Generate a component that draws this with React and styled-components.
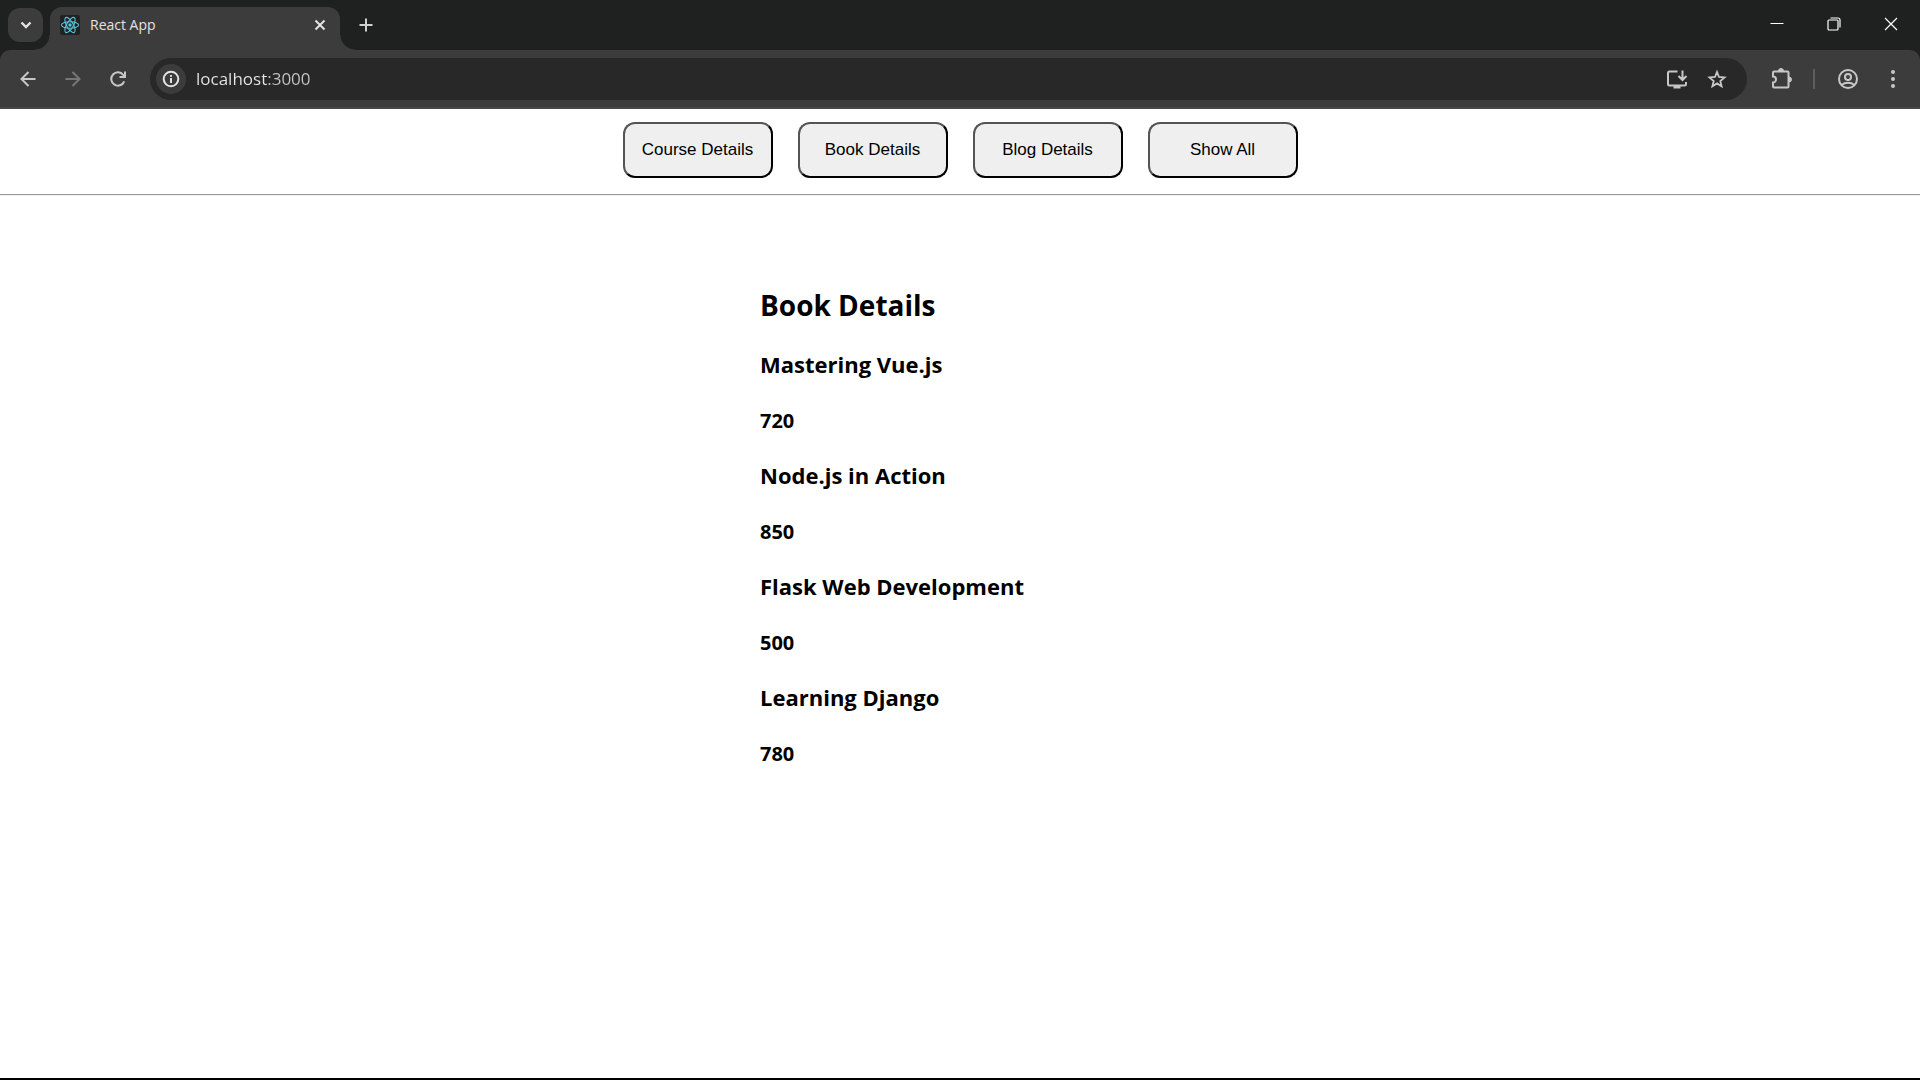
import React, { useState } from "react";
import styled, { createGlobalStyle } from "styled-components";

const GlobalStyle = createGlobalStyle`
  *, *::before, *::after { box-sizing: border-box; }
  html, body, #root { height: 100%; }
  body { margin: 0; background: #fff; color: #000; }
`;

const uiFont = '"Open Sans", "Noto Sans", sans-serif';
const chrome = "#3c3c3c";
const frame = "#1f2120";

const Window = styled.div`
  display: flex;
  flex-direction: column;
  min-height: 100%;
  border-bottom: 2px solid #000;
  font-family: ${uiFont};
`;

const TabStrip = styled.div`
  display: flex;
  align-items: flex-start;
  height: 50px;
  padding: 0 1px 0 8px;
  background: ${frame};
`;

const PlainButton = styled.button`
  display: flex;
  align-items: center;
  justify-content: center;
  padding: 0;
  border: 0;
  background: transparent;
  color: ${(p) => p.$color || "#c7c7c7"};
`;

const TabSearch = styled(PlainButton)`
  width: 35px;
  height: 34px;
  margin: 8px 7px 0 0;
  border-radius: 12px;
  background: ${chrome};
`;

const Tab = styled.div`
  position: relative;
  display: flex;
  align-items: center;
  width: 290px;
  height: 43px;
  margin-top: 7px;
  padding: 0 8px 8px 10px;
  border-radius: 12px 12px 0 0;
  background: ${chrome};

  &::before, &::after {
    content: "";
    position: absolute;
    bottom: 0;
    width: 15px;
    height: 15px;
  }
  &::before {
    right: 100%;
    background: radial-gradient(circle at 0 0, transparent 14px, ${chrome} 15px);
  }
  &::after {
    left: 100%;
    background: radial-gradient(circle at 100% 0, transparent 14px, ${chrome} 15px);
  }
`;

const TabTitle = styled.span`
  flex: 1;
  margin-left: 10px;
  font-size: 14px;
  line-height: 20px;
  color: #e3e3e3;
`;

const TabButton = styled(PlainButton)`
  width: 24px;
  height: 24px;
`;

const NewTab = styled(PlainButton)`
  width: 36px;
  height: 36px;
  margin: 7px 0 0 8px;
`;

const WindowControls = styled.div`
  display: flex;
  margin-left: auto;
`;

const WindowButton = styled(PlainButton)`
  width: 57px;
  height: 48px;
`;

const ToolbarFrame = styled.div`
  background: ${frame};
`;

const Toolbar = styled.div`
  display: flex;
  align-items: center;
  height: 59px;
  padding: 0 5px 2px;
  border-radius: 10px 10px 0 0;
  background: ${chrome};
  box-shadow: inset 0 -2px #484848;
`;

const ToolButton = styled(PlainButton)`
  width: 45px;
  height: 42px;
`;

const Omnibox = styled.form`
  flex: 1;
  display: flex;
  align-items: center;
  height: 42px;
  margin: 0 11px 0 10px;
  padding: 0 10px 0 6px;
  border-radius: 21px;
  background: #282828;
`;

const SiteInfo = styled(PlainButton)`
  width: 30px;
  height: 30px;
  border-radius: 50%;
  background: ${chrome};
`;

const Address = styled.input`
  flex: 1;
  min-width: 0;
  margin-left: 10px;
  padding: 0;
  border: 0;
  outline: 0;
  font-family: ${uiFont};
  font-size: 17px;
  line-height: 24px;
  color: transparent;
  background: linear-gradient(to right, #e8e8e8 72px, #c7c7c7 72px);
  background-clip: text;
`;

const OmniboxButton = styled(PlainButton)`
  width: 40px;
  height: 40px;
`;

const Divider = styled.span`
  width: 2px;
  height: 20px;
  margin: 0 10px;
  background: #5e5e5e;
`;

const Nav = styled.nav`
  display: flex;
  justify-content: center;
  gap: 25px;
  padding: 13px 0 16px;
`;

const NavButton = styled.button`
  width: 150px;
  height: 56px;
  padding: 0;
  border: 2px outset #000;
  border-radius: 12px;
  background: #efefef;
  color: #000;
  font-family: "Liberation Sans", Arial, sans-serif;
  font-size: 17px;
`;

const Rule = styled.hr`
  width: 100%;
  margin: 0;
  border: 0;
  border-top: 1px solid #9a9a9a;
  border-bottom: 1px solid #eeeeee;
`;

const Content = styled.main`
  width: 400px;
  margin: 89px auto 0;
`;

const Title = styled.h2`
  margin: 0 0 23px;
  font-size: 28px;
  line-height: 40px;
`;

const BookName = styled.h3`
  margin: 0;
  font-size: 22px;
  line-height: 32px;
`;

const BookPrice = styled.h4`
  margin: 28px 0 25px;
  font-size: 20px;
  line-height: 26px;
`;

const books = [
  { name: "Mastering Vue.js", price: 720 },
  { name: "Node.js in Action", price: 850 },
  { name: "Flask Web Development", price: 500 },
  { name: "Learning Django", price: 780 },
];

const Icon = ({ size = 24, width = 2, children }) => (
  <svg width={size} height={size} viewBox={`0 0 ${size} ${size}`} fill="none" stroke="currentColor" strokeWidth={width} aria-hidden="true">
    {children}
  </svg>
);

const ReactLogo = () => (
  <svg width="20" height="20" viewBox="0 0 20 20" fill="none" stroke="#58c4dc" aria-hidden="true">
    <rect width="20" height="20" rx="2" fill="#222" stroke="none" />
    {[0, 60, 120].map((angle) => (
      <ellipse key={angle} cx="10" cy="10" rx="8.6" ry="3.3" strokeWidth="1.1" transform={`rotate(${angle} 10 10)`} />
    ))}
    <circle cx="10" cy="10" r="1.7" fill="#58c4dc" stroke="none" />
  </svg>
);

export default function App() {
  const [address, setAddress] = useState("localhost:3000");
  return (
    <Window>
      <GlobalStyle />
      <TabStrip>
        <TabSearch aria-label="Search tabs" $color="#e3e3e3">
          <Icon size={16} width={2.4}><path d="M3.5 5.5 8 10l4.5-4.5" /></Icon>
        </TabSearch>
        <Tab>
          <ReactLogo />
          <TabTitle>React App</TabTitle>
          <TabButton aria-label="Close tab" $color="#e3e3e3">
            <Icon size={16}><path d="m3.5 3.5 9 9m0-9-9 9" /></Icon>
          </TabButton>
        </Tab>
        <NewTab aria-label="New tab" $color="#d0d0d0">
          <Icon size={18}><path d="M9 2.5v13M2.5 9h13" /></Icon>
        </NewTab>
        <WindowControls>
          <WindowButton aria-label="Minimize" $color="#fff">
            <Icon size={14} width={1}><path d="M.5 6.5h13" /></Icon>
          </WindowButton>
          <WindowButton aria-label="Restore" $color="#fff">
            <Icon size={14} width={1.2}>
              <rect x="1" y="3" width="10" height="10" rx="1" />
              <path d="M3.5 1H11a2 2 0 0 1 2 2v7.5" />
            </Icon>
          </WindowButton>
          <WindowButton aria-label="Close" $color="#fff">
            <Icon size={14} width={1.2}><path d="m1 1 12 12M13 1 1 13" /></Icon>
          </WindowButton>
        </WindowControls>
      </TabStrip>
      <ToolbarFrame>
        <Toolbar>
          <ToolButton aria-label="Back">
            <Icon><path d="M19.5 12H5.5M12.5 5l-7 7 7 7" /></Icon>
          </ToolButton>
          <ToolButton aria-label="Forward" $color="#777">
            <Icon><path d="M4.5 12h14M11.5 5l7 7-7 7" /></Icon>
          </ToolButton>
          <ToolButton aria-label="Reload">
            <Icon>
              <path d="M18.2 14.3A6.7 6.7 0 1 1 17.3 8l1.7 2" />
              <path d="M19 4.5V10h-5.5" />
            </Icon>
          </ToolButton>
          <Omnibox onSubmit={(e) => e.preventDefault()}>
            <SiteInfo type="button" aria-label="View site information" $color="#e3e3e3">
              <Icon size={20}>
                <circle cx="10" cy="10" r="7.3" />
                <path d="M10 9v5M10 6v1.8" />
              </Icon>
            </SiteInfo>
            <Address aria-label="Address" value={address} onChange={(e) => setAddress(e.target.value)} />
            <OmniboxButton type="button" aria-label="Install app">
              <Icon>
                <path d="M12.5 4.500H4.500a1.500 1.500 0 0 0-1.500 1.500v11a1.500 1.500 0 0 0 1.500 1.500h15a1.500 1.500 0 0 0 1.500-1.500V15M17.500 3.500v9M13.500 9l4 4 4-4" />
                <path d="M8.500 20h7" strokeWidth="3" />
              </Icon>
            </OmniboxButton>
            <OmniboxButton type="button" aria-label="Bookmark this tab">
              <Icon>
                <path d="m12 5 2 5 5.500.4-4.200 3.600 1.300 5.300-4.600-2.900-4.600 2.900 1.300-5.300-4.200-3.600 5.500-.4z" strokeWidth="1.800" />
              </Icon>
            </OmniboxButton>
          </Omnibox>
          <ToolButton aria-label="Extensions">
            <Icon>
              <path d="M5 4.500h13.500a1 1 0 0 1 1 1v14a1 1 0 0 1-1 1H5a1 1 0 0 1-1-1V15.500a3 3 0 0 0 0-6V5.500a1 1 0 0 1 1-1z" />
              <path d="M9.500 4a2.300 2.300 0 0 1 5 0zM20 10a2.300 2.300 0 0 1 0 5z" fill="currentColor" strokeWidth="1" />
            </Icon>
          </ToolButton>
          <Divider />
          <ToolButton aria-label="Profile">
            <Icon>
              <circle cx="12" cy="12" r="9" />
              <circle cx="12" cy="10" r="3" />
              <path d="M5.500 18a10.500 10.500 0 0 1 13 0" />
            </Icon>
          </ToolButton>
          <ToolButton aria-label="Menu">
            <Icon>
              <g fill="currentColor" stroke="none">
                <circle cx="12" cy="5" r="2" />
                <circle cx="12" cy="12" r="2" />
                <circle cx="12" cy="19" r="2" />
              </g>
            </Icon>
          </ToolButton>
        </Toolbar>
      </ToolbarFrame>
      <Nav>
        <NavButton>Course Details</NavButton>
        <NavButton>Book Details</NavButton>
        <NavButton>Blog Details</NavButton>
        <NavButton>Show All</NavButton>
      </Nav>
      <Rule />
      <Content>
        <Title>Book Details</Title>
        {books.map((book) => (
          <React.Fragment key={book.name}>
            <BookName>{book.name}</BookName>
            <BookPrice>{book.price}</BookPrice>
          </React.Fragment>
        ))}
      </Content>
    </Window>
  );
}
